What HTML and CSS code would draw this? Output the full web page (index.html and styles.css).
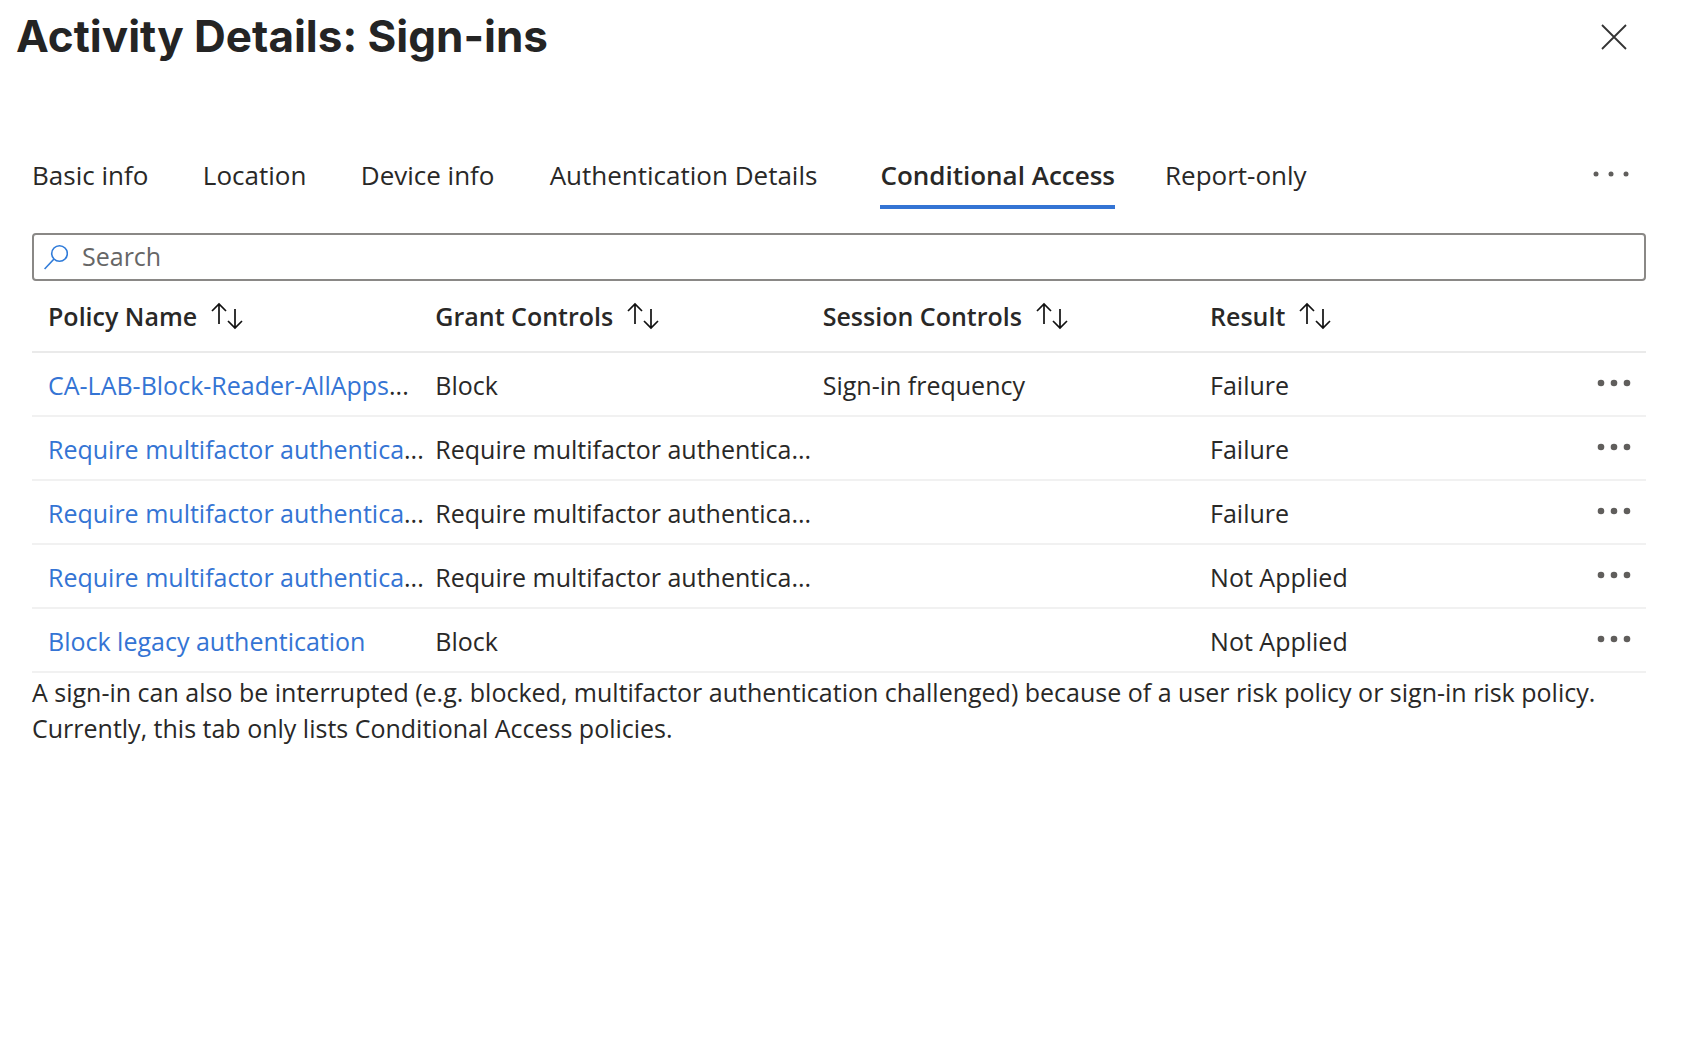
FILE: index.html
```
<!DOCTYPE html>
<html lang="en">
<head>
	<meta charset="UTF-8">
	<title>Activity Details: Sign-ins</title>
	<link rel="stylesheet" href="styles.css">
</head>
<body>

<!-- shared icons -->
<svg class="sprite" aria-hidden="true">
	<symbol id="sort" viewBox="0 0 32 28">
		<path d="M8 22V2M1 9l7-7 7 7M24 7v19M17 19l7 7 7-7" fill="none" stroke="currentColor" stroke-width="1.7"/>
	</symbol>
	<symbol id="more" viewBox="0 0 34 8">
		<circle cx="4" cy="4" r="3.3"/>
		<circle cx="17" cy="4" r="3.3"/>
		<circle cx="30" cy="4" r="3.3"/>
	</symbol>
</svg>

<header class="header">
	<h1>Activity Details: Sign-ins</h1>
	<button class="close" aria-label="Close">
		<svg width="26" height="26" viewBox="0 0 26 26"><path d="M1 1l24 24M25 1L1 25" stroke="currentColor" stroke-width="1.8"/></svg>
	</button>
</header>

<main>
	<div class="tabs">
		<div class="tab-list" role="tablist">
			<button class="tab" role="tab" data-label="Basic info">Basic info</button>
			<button class="tab" role="tab" data-label="Location">Location</button>
			<button class="tab" role="tab" data-label="Device info">Device info</button>
			<button class="tab" role="tab" data-label="Authentication Details">Authentication Details</button>
			<button class="tab active" role="tab" aria-selected="true" data-label="Conditional Access">Conditional Access</button>
			<button class="tab" role="tab" data-label="Report-only">Report-only</button>
		</div>
		<button class="overflow" aria-label="More tabs">
			<svg width="36" height="6" viewBox="0 0 36 6"><circle cx="3" cy="3" r="2.5"/><circle cx="18" cy="3" r="2.5"/><circle cx="33" cy="3" r="2.5"/></svg>
		</button>
	</div>

	<label class="search">
		<svg width="24" height="26" viewBox="0 0 24 26"><circle cx="15.5" cy="9.5" r="7.8" fill="none" stroke="currentColor" stroke-width="1.6"/><path d="M10 15L.6 25" stroke="currentColor" stroke-width="1.6"/></svg>
		<input type="text" placeholder="Search" aria-label="Search">
	</label>

	<table>
		<thead>
			<tr>
				<th><button>Policy Name <svg class="sort"><use href="#sort"/></svg></button></th>
				<th><button>Grant Controls <svg class="sort"><use href="#sort"/></svg></button></th>
				<th><button>Session Controls <svg class="sort"><use href="#sort"/></svg></button></th>
				<th><button>Result <svg class="sort"><use href="#sort"/></svg></button></th>
				<th class="actions"></th>
			</tr>
		</thead>
		<tbody>
			<tr>
				<td><a href="#">CA-LAB-Block-Reader-AllApps</a>...</td>
				<td>Block</td>
				<td>Sign-in frequency</td>
				<td>Failure</td>
				<td class="actions"><button aria-label="Row actions"><svg class="more"><use href="#more"/></svg></button></td>
			</tr>
			<tr>
				<td><a href="#">Require multifactor authentica</a>...</td>
				<td>Require multifactor authentica...</td>
				<td></td>
				<td>Failure</td>
				<td class="actions"><button aria-label="Row actions"><svg class="more"><use href="#more"/></svg></button></td>
			</tr>
			<tr>
				<td><a href="#">Require multifactor authentica</a>...</td>
				<td>Require multifactor authentica...</td>
				<td></td>
				<td>Failure</td>
				<td class="actions"><button aria-label="Row actions"><svg class="more"><use href="#more"/></svg></button></td>
			</tr>
			<tr>
				<td><a href="#">Require multifactor authentica</a>...</td>
				<td>Require multifactor authentica...</td>
				<td></td>
				<td>Not Applied</td>
				<td class="actions"><button aria-label="Row actions"><svg class="more"><use href="#more"/></svg></button></td>
			</tr>
			<tr>
				<td><a href="#">Block legacy authentication</a></td>
				<td>Block</td>
				<td></td>
				<td>Not Applied</td>
				<td class="actions"><button aria-label="Row actions"><svg class="more"><use href="#more"/></svg></button></td>
			</tr>
		</tbody>
	</table>

	<p>A sign-in can also be interrupted (e.g. blocked, multifactor authentication challenged) because of a user risk policy or sign-in risk policy. Currently, this tab only lists Conditional Access policies.</p>
</main>

</body>
</html>
```
FILE: styles.css
```
* {
	box-sizing: border-box;
	margin: 0;
	padding: 0;
}

body {
	background: #fff;
	color: #292827;
	font: 25px/36px "Segoe UI", "Open Sans", sans-serif;
}

button {
	border: 0;
	background: none;
	color: inherit;
	font: inherit;
	cursor: pointer;
}

svg {
	display: block;
	flex: none;
}

.sprite {
	position: absolute;
	width: 0;
	height: 0;
}

.header {
	display: flex;
	justify-content: space-between;
	align-items: center;
	height: 74px;
	padding: 0 59px 0 16px;
}

h1 {
	padding-bottom: 2px;
	font: 700 44px/64px Inter, sans-serif;
	color: #242424;
}

.close {
	color: #333;
}

main {
	padding: 74px 40px 0 32px;
}

.tabs {
	display: flex;
	justify-content: space-between;
	align-items: flex-start;
	margin-bottom: 24px;
}

.tab-list {
	display: flex;
	gap: 50px;
}

.tab {
	height: 61px;
	padding-bottom: 4px;
	border-bottom: 4px solid transparent;
	font-size: 26px;
	line-height: 52px;
	text-align: left;
	white-space: nowrap;
}

/* keeps room for the bold label so tabs don't jump when selected */
.tab::after {
	content: attr(data-label);
	display: block;
	height: 0;
	overflow: hidden;
	visibility: hidden;
	font-weight: 600;
}

.tab.active {
	border-color: #3474d4;
	font-weight: 600;
}

.overflow {
	padding: 23px 17px;
	fill: #605e5c;
}

.search {
	display: flex;
	align-items: center;
	gap: 14px;
	height: 48px;
	padding: 0 10px 2px;
	border: 2px solid #8a8886;
	border-radius: 4px;
	color: #2f7bd9;
}

.search svg {
	margin-top: 2px;
}

.search input {
	flex: 1;
	border: 0;
	outline: 0;
	background: none;
	color: #292827;
	font: inherit;
}

.search input::placeholder {
	color: #666;
	opacity: 1;
}

table {
	width: 100%;
	table-layout: fixed;
	border-collapse: separate;
	border-spacing: 0;
}

th, td {
	width: 24%;
	height: 64px;
	padding: 2px 0 0 16px;
	border-bottom: 2px solid #f1f1f1;
	text-align: left;
	white-space: nowrap;
}

th {
	height: 72px;
	padding-top: 0;
	border-color: #eaeaea;
	font-weight: 600;
}

th button {
	display: flex;
	align-items: center;
	gap: 14px;
}

.sort {
	width: 32px;
	height: 28px;
	color: #111;
}

.actions {
	width: 4%;
	padding: 0 15px 2px 0;
}

.actions button {
	display: block;
	margin-left: auto;
}

.more {
	width: 34px;
	height: 8px;
	fill: #605e5c;
}

p {
	padding-top: 1px;
}

a {
	color: #3474d4;
	text-decoration: none;
}
```
